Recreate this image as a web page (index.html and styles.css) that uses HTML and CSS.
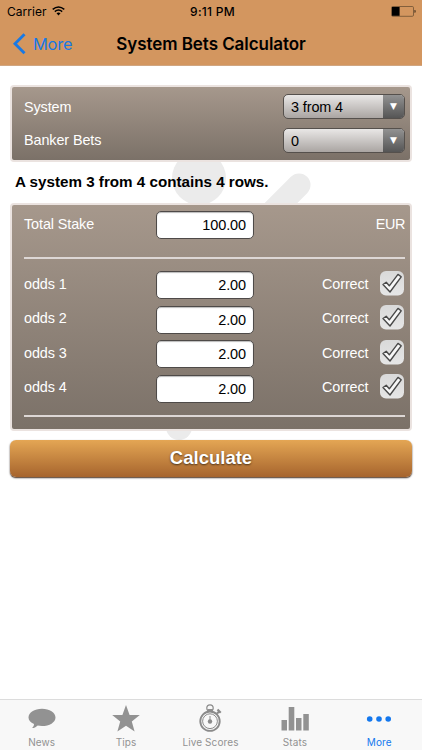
FILE: index.html
```html
<!DOCTYPE html>
<html lang="en">
<head>
<meta charset="utf-8">
<title>System Bets Calculator</title>
<link rel="stylesheet" href="styles.css">
</head>
<body>
<svg class="hidden" width="0" height="0">
  <defs>
    <linearGradient id="box" x1="0" y1="0" x2="0" y2="1"><stop offset="0" stop-color="#d9d9d9"/><stop offset="1" stop-color="#e6e6e6"/></linearGradient>
    <symbol id="check" viewBox="0 0 26 26">
      <rect x="1" y="1" width="24" height="24.500" rx="6" fill="url(#box)"/>
      <path d="M4 14.500 7.200 12.200 10.300 15.800 19 4.400 22.200 6.800 11 22Z" fill="#f7f7f7" stroke="#484848" stroke-width="1.400" stroke-linejoin="round"/>
    </symbol>
  </defs>
</svg>
<header class="header">
  <div class="status">
    <div class="carrier"><span>Carrier</span>
      <svg width="13" height="10" viewBox="0 0 13 10"><g fill="none" stroke="#000" stroke-width="1.5"><path d="M.7 3.4Q6.5-1.5 12.3 3.4"/><path d="M2.8 5.6Q6.5 2.5 10.2 5.6"/></g><path d="M4.5 7.3Q6.5 5.7 8.5 7.3L6.5 9.5Z"/></svg>
    </div>
    <div class="time">9:11 PM</div>
    <svg class="battery" width="25" height="11" viewBox="0 0 25 11"><rect x=".5" y=".5" width="22" height="9.8" rx="1.2" fill="none" stroke="#6e5034" stroke-width=".8"/><rect x="1" y="1" width="7.6" height="8.8"/><path d="M23.6 4h.6q.6 1.3 0 2.8h-.6z"/></svg>
  </div>
  <nav class="nav">
    <a class="back"><svg width="13" height="22" viewBox="0 0 13 22"><path d="M11.5 1.3 2 10.8l9.5 9.5" fill="none" stroke="#1879e5" stroke-width="2.9"/></svg><span>More</span></a>
    <h1>System Bets Calculator</h1>
  </nav>
</header>
<main class="main">
  <svg class="watermark" width="422" height="310" viewBox="0 150 422 310"><g fill="#ebebeb"><circle cx="199" cy="178" r="27"/><circle cx="179" cy="427" r="13"/></g><path d="M299 185 230 254" stroke="#ebebeb" stroke-width="23" stroke-linecap="round"/></svg>
  <section class="panel choices">
    <div class="choice"><span>System</span><div class="select"><span>3 from 4</span><i>▼</i></div></div>
    <div class="choice"><span>Banker Bets</span><div class="select"><span>0</span><i>▼</i></div></div>
  </section>
  <p class="summary">A system 3 from 4 contains 4 rows.</p>
  <section class="panel bets">
    <div class="row stake"><span>Total Stake</span><div class="field">100.00</div><span class="end">EUR</span></div>
    <hr>
    <div class="row"><span>odds 1</span><div class="field">2.00</div><span class="correct">Correct</span><svg class="check"><use href="#check"/></svg></div>
    <div class="row"><span>odds 2</span><div class="field">2.00</div><span class="correct">Correct</span><svg class="check"><use href="#check"/></svg></div>
    <div class="row"><span>odds 3</span><div class="field">2.00</div><span class="correct">Correct</span><svg class="check"><use href="#check"/></svg></div>
    <div class="row"><span>odds 4</span><div class="field">2.00</div><span class="correct">Correct</span><svg class="check"><use href="#check"/></svg></div>
    <hr class="last">
  </section>
  <div class="calculate">Calculate</div>
</main>
<footer class="tabs">
  <div class="tab"><svg width="30" height="30" viewBox="0 0 30 30"><path d="M15 5.7c7.5 0 13.5 3.8 13.5 8.7S22.5 23 15 23c-1.5 0-3-.2-4.3-.5-1.7 1.700-3.600 2.600-5.700 2.600 1.300-1 2-2.400 2-4.100-3.400-1.600-5.500-3.900-5.500-6.600C1.500 9.500 7.500 5.700 15 5.700z" fill="#929292"/></svg><span>News</span></div>
  <div class="tab"><svg width="30" height="30" viewBox="0 0 30 30"><path d="M15 2l3.600 10H28.800l-8 6.600 2.800 10L15 22.800 6.400 28.600l2.800-10-8-6.600H11.400z" fill="#929292"/></svg><span>Tips</span></div>
  <div class="tab"><svg width="30" height="30" viewBox="0 0 30 30"><g fill="none" stroke="#8b8b8b"><circle cx="15" cy="18.200" r="9.700" stroke-width="1.900"/><circle cx="15" cy="18.200" r="7.400" stroke-width="1"/><circle cx="15" cy="5" r="3.200" stroke-width="1.200"/><path d="M22 10.500l2.500-2.300M22.500 6.500l3.200 3.300" stroke-width="2.200"/><path d="M12.500 7.300h5" stroke-width="2.500"/></g><circle cx="15" cy="18.500" r="2.200" fill="#8b8b8b"/><path d="M14.500 13h1v6h-1z" fill="#8b8b8b"/></svg><span>Live Scores</span></div>
  <div class="tab"><svg width="30" height="30" viewBox="0 0 30 30"><path d="M1.500 17H7v10.500H1.500zM8.700 4h5.600v23.500H8.700zM16 15h5.500v12.500H16zM23.300 11h5.500v16.500h-5.500z" fill="#929292"/></svg><span>Stats</span></div>
  <div class="tab active"><svg width="30" height="30" viewBox="0 0 30 30"><g fill="#1478ee"><circle cx="5.700" cy="16" r="2.800"/><circle cx="15" cy="16" r="2.800"/><circle cx="24.200" cy="16" r="2.800"/></g></svg><span>More</span></div>
</footer>
</body>
</html>
```
FILE: styles.css
```css
* { box-sizing: border-box; }
body {
  margin: 0;
  width: 422px;
  height: 750px;
  display: flex;
  flex-direction: column;
  background: #fff;
  font-family: "Liberation Sans", sans-serif;
  font-size: 14.400px;
  overflow: hidden;
}
svg { display: block; flex: none; }
.hidden { position: absolute; }
.header {
  height: 66px;
  background: #d3965f;
  border-bottom: 1px solid #d0a681;
  font-family: Inter, sans-serif;
}
.status {
  height: 22px;
  display: grid;
  grid-template-columns: 1fr auto 1fr;
  align-items: center;
  padding: 0 6px 0 7px;
  font-size: 12px;
}
.carrier { display: flex; gap: 5px; align-items: center; letter-spacing: .05px; }
.time { font-weight: 500; letter-spacing: .25px; padding-left: 2px; }
.battery { justify-self: end; }
.nav {
  height: 43px;
  display: grid;
  grid-template-columns: 104px 1fr 104px;
  align-items: center;
}
.back { display: flex; align-items: center; gap: 7px; padding-left: 13px; color: #1879e5; font-size: 16.400px; letter-spacing: -.2px; }
h1 { margin: 0; font-size: 17px; font-weight: 600; letter-spacing: -.06px; text-align: center; white-space: nowrap; }
.main {
  position: relative;
  flex: 1;
  padding: 19px 10px 0;
}
.watermark { position: absolute; left: 0; top: 84px; }
.panel {
  position: relative;
  border: 2px solid #ebe3e0;
  border-radius: 4px;
  background: linear-gradient(#a6988c, #7b7168);
  color: #fff;
  letter-spacing: -.1px;
}
.choices { height: 77px; padding: 7px 5px 0 12px; }
.choice { display: flex; justify-content: space-between; align-items: center; height: 25px; margin-bottom: 8.500px; }
.select {
  display: flex;
  width: 122px;
  height: 25px;
  border: 1px solid #55504c;
  border-radius: 5px;
  overflow: hidden;
  background: linear-gradient(#e9e7e6, #aaa5a2);
  color: #000;
  line-height: 25px;
}
.select span { flex: 1; padding-left: 7px; }
.select i {
  width: 21px;
  background: linear-gradient(#929292, #555);
  color: #fff;
  font: 9px/22px "DejaVu Sans", sans-serif;
  text-align: center;
}
.summary {
  position: relative;
  margin: 0;
  height: 41px;
  padding: 0 5px;
  font-size: 15.200px;
  font-weight: bold;
  line-height: 39px;
  white-space: nowrap;
}
.bets { height: 228px; padding: 6px 5px 0 12px; }
.row {
  display: grid;
  grid-template-columns: 132px 98px 68px 1fr 26px;
  align-items: center;
  height: 28px;
  margin-bottom: 6.600px;
}
.row > span { line-height: 20px; margin-top: -3px; }
.stake { margin-bottom: 0; }
.stake .end { grid-column: 3 / 6; text-align: right; letter-spacing: -.4px; }
.correct { grid-column: 4; }
.check { grid-column: 5; width: 26px; height: 26px; margin-top: -5px; }
.field {
  height: 28px;
  padding-right: 7px;
  border: 1px solid #4e4a48;
  border-radius: 5px;
  background: #fff;
  box-shadow: inset 0 1px 1px #bbb;
  color: #000;
  font-size: 14.500px;
  line-height: 27px;
  text-align: right;
}
hr { margin: 18px 0 12px; border: 0; height: 2px; background: #ddd7d5; }
hr.last { margin: 12px 0 0; }
.calculate {
  position: relative;
  height: 37px;
  margin: 9px 0 0;
  border-radius: 6px;
  background: linear-gradient(#e4a654, #a6642d);
  box-shadow: 0 1px 1px #6d5747, 0 1px 2px #777;
  color: #fff;
  font-size: 18.500px;
  font-weight: bold;
  line-height: 36px;
  text-align: center;
  text-shadow: 0 1px 2px #493018;
}
.tabs {
  display: grid;
  grid-template-columns: repeat(5, 1fr);
  height: 51px;
  border-top: 1px solid #dcdcdc;
  background: #f8f8f8;
  color: #929292;
  font: 10px/14px Inter, sans-serif;
}
.tab { display: flex; flex-direction: column; align-items: center; padding: 3px 1px 0 0; gap: 2px; letter-spacing: .1px; }
.active { color: #1478ee; }
```
